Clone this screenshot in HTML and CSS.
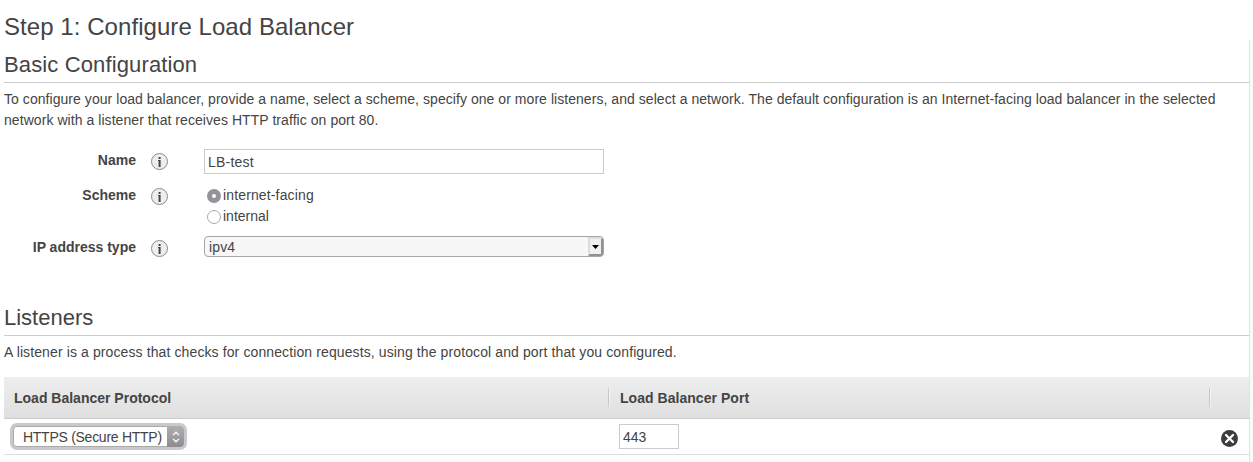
FILE: index.html
```html
<!DOCTYPE html>
<html lang="en">
<head>
<meta charset="utf-8">
<title>Configure Load Balancer</title>
<link rel="stylesheet" href="styles.css">
</head>
<body>
<h1 class="title"><span class="t-title">Step 1: Configure Load Balancer</span></h1>
<main class="panel">
  <section class="basic">
    <h2 class="heading"><span class="t-basic">Basic Configuration</span></h2>
    <p class="intro"><span class="t-intro1">To configure your load balancer, provide a name, select a scheme, specify one or more listeners, and select a network. The default configuration is an Internet-facing load balancer in the selected</span><br><span class="t-intro2">network with a listener that receives HTTP traffic on port 80.</span></p>
    <div class="form">
      <div class="row row-name">
        <span class="label"><span class="t-name">Name</span></span>
        <svg class="info" viewBox="0 0 18 18"><circle cx="9.5" cy="8.5" r="8" /><path d="M8.6 4h2v2h-2zM8 7h2.6v7h-2V8H8z"/></svg>
        <div class="input name-input"><span class="t-lb">LB-test</span></div>
      </div>
      <div class="row row-scheme">
        <span class="label"><span class="t-scheme">Scheme</span></span>
        <svg class="info" viewBox="0 0 18 18"><circle cx="9.5" cy="8.5" r="8" /><path d="M8.6 4h2v2h-2zM8 7h2.6v7h-2V8H8z"/></svg>
        <div class="radios">
          <div class="option"><span class="radio checked"></span><span class="t-facing">internet-facing</span></div>
          <div class="option"><span class="radio"></span><span class="t-internal">internal</span></div>
        </div>
      </div>
      <div class="row row-ip">
        <span class="label"><span class="t-ip">IP address type</span></span>
        <svg class="info" viewBox="0 0 18 18"><circle cx="9.5" cy="8.5" r="8" /><path d="M8.6 4h2v2h-2zM8 7h2.6v7h-2V8H8z"/></svg>
        <div class="select"><span class="t-ipv4">ipv4</span><span class="drop"><svg viewBox="0 0 7 4"><path d="M0 0h7L3.5 4z"/></svg></span></div>
      </div>
    </div>
  </section>
  <section class="listeners">
    <h2 class="heading"><span class="t-listeners">Listeners</span></h2>
    <p class="intro"><span class="t-desc">A listener is a process that checks for connection requests, using the protocol and port that you configured.</span></p>
    <div class="table">
      <div class="thead">
        <div class="th"><span class="t-proto">Load Balancer Protocol</span></div>
        <div class="th divided"><span class="t-port">Load Balancer Port</span></div>
        <div class="th divided"></div>
      </div>
      <div class="tr">
        <div class="td protocol"><div class="mac-select"><span class="value"><span class="t-https">HTTPS (Secure HTTP)</span></span><span class="stepper"><svg viewBox="0 0 8 12"><path d="M1 4.1L4 1.2l3 2.9M1 7.9l3 2.9 3-2.9"/></svg></span></div></div>
        <div class="td port"><div class="input port-input"><span class="t-443">443</span></div></div>
        <div class="td remove"><svg viewBox="0 0 18 18"><circle cx="8.5" cy="9.5" r="8.5"/><path d="M5 6l7 7M12 6l-7 7"/></svg></div>
      </div>
    </div>
  </section>
</main>
</body>
</html>
```
FILE: styles.css
```css
* { box-sizing: border-box; }
body {
  margin: 0;
  height: 462px;
  overflow: hidden;
  display: flex;
  flex-direction: column;
  background: #fff;
  color: #444;
  font: 14px/21px "Liberation Sans", Arial, sans-serif;
  white-space: nowrap;
}
h1, h2, p { margin: 0; font-weight: normal; }
svg { display: block; flex: none; }
.title { height: 40px; padding: 12px 0 0 4px; font-size: 24px; line-height: 30px; letter-spacing: .06px; }
.panel { flex: 1; padding-left: 4px; border-right: 1px solid #e2e2e2; margin-right: 3px; box-shadow: 3px 0 #fafafa; }
.heading { height: 43px; padding-top: 11px; border-bottom: 1px solid #ccc; font-size: 22px; line-height: 28px; }
.t-basic { letter-spacing: .13px; }
.basic { height: 253px; }
.intro { padding-top: 6px; }
.t-intro1 { letter-spacing: .052px; }
.t-intro2 { letter-spacing: .06px; }
.t-desc { letter-spacing: .11px; }
.form { padding-top: 18px; }
.row { display: flex; align-items: flex-start; }
.row-name { height: 36px; }
.row-scheme { height: 51px; }
.label { width: 132px; text-align: right; font-weight: bold; }
.row-name .label, .row-ip .label { padding-top: 1px; }
.info { width: 18px; height: 18px; margin: 4px 36px 0 14px; }
.row-scheme .info { margin-top: 3px; }
.info circle { fill: #eee; stroke: #8b8b8b; }
.info path { fill: #444; }
.input { border: 1px solid #ccc; height: 25px; padding-left: 3px; line-height: 24px; }
.name-input { width: 400px; letter-spacing: .2px; }
.option { display: flex; align-items: center; height: 21px; gap: 2px; padding-left: 3px; }
.t-facing { letter-spacing: .14px; }
.radio { width: 14px; height: 14px; border: 1px solid #aaa; border-radius: 50%; background: #fff; }
.radio.checked { border: 5px solid #949498; }
.select { display: flex; justify-content: space-between; width: 400px; height: 21px; border: 1px solid #a6a6a6; border-radius: 4px; background: #f7f7f7; padding-left: 4px; line-height: 20px; letter-spacing: .15px; overflow: hidden; }
.drop { width: 15px; display: flex; align-items: center; justify-content: center; border: 2px solid; border-color: #ddd #929292 #929292 #ddd; background: #f0f0f0; }
.drop svg { width: 7px; height: 4px; }
.table { margin-top: 14px; }
.thead, .tr { display: grid; grid-template-columns: 604px 601px 1fr; }
.thead { height: 42px; border-bottom: 1px solid #ccc; background: linear-gradient(#eee, #dfdfdf); font-weight: bold; }
.th { padding: 0 10px; line-height: 42px; }
.divided { height: 19px; margin-top: 11px; border-left: 1px solid #c8c8c8; box-shadow: inset 1px 0 #f4f4f4; padding-left: 11px; line-height: 20px; }
.t-port { letter-spacing: .04px; }
.tr { height: 36px; border-bottom: 1px solid #ddd; }
.protocol { padding: 4px 0 0 6px; }
.mac-select { display: flex; width: 177px; height: 27px; border: 3px solid #c9c9cc; border-radius: 7px; }
.value { flex: 1; border: 1px solid #aaa; border-right: 0; border-radius: 4px 0 0 4px; padding-left: 9px; line-height: 20px; letter-spacing: -.27px; }
.stepper { width: 17px; display: flex; align-items: center; justify-content: center; border-radius: 0 4px 4px 0; background: linear-gradient(#aeaeb1, #8d8d91); }
.stepper svg { width: 8px; height: 12px; fill: none; stroke: #fff; stroke-width: 1.3; }
.port { padding: 5px 0 0 11px; }
.port-input { width: 60px; }
.remove { padding: 10px 0 0 12px; }
.remove svg { width: 18px; height: 18px; }
.remove circle { fill: #3d3d3d; }
.remove path { stroke: #fff; stroke-width: 2.3; stroke-linecap: round; }
```
